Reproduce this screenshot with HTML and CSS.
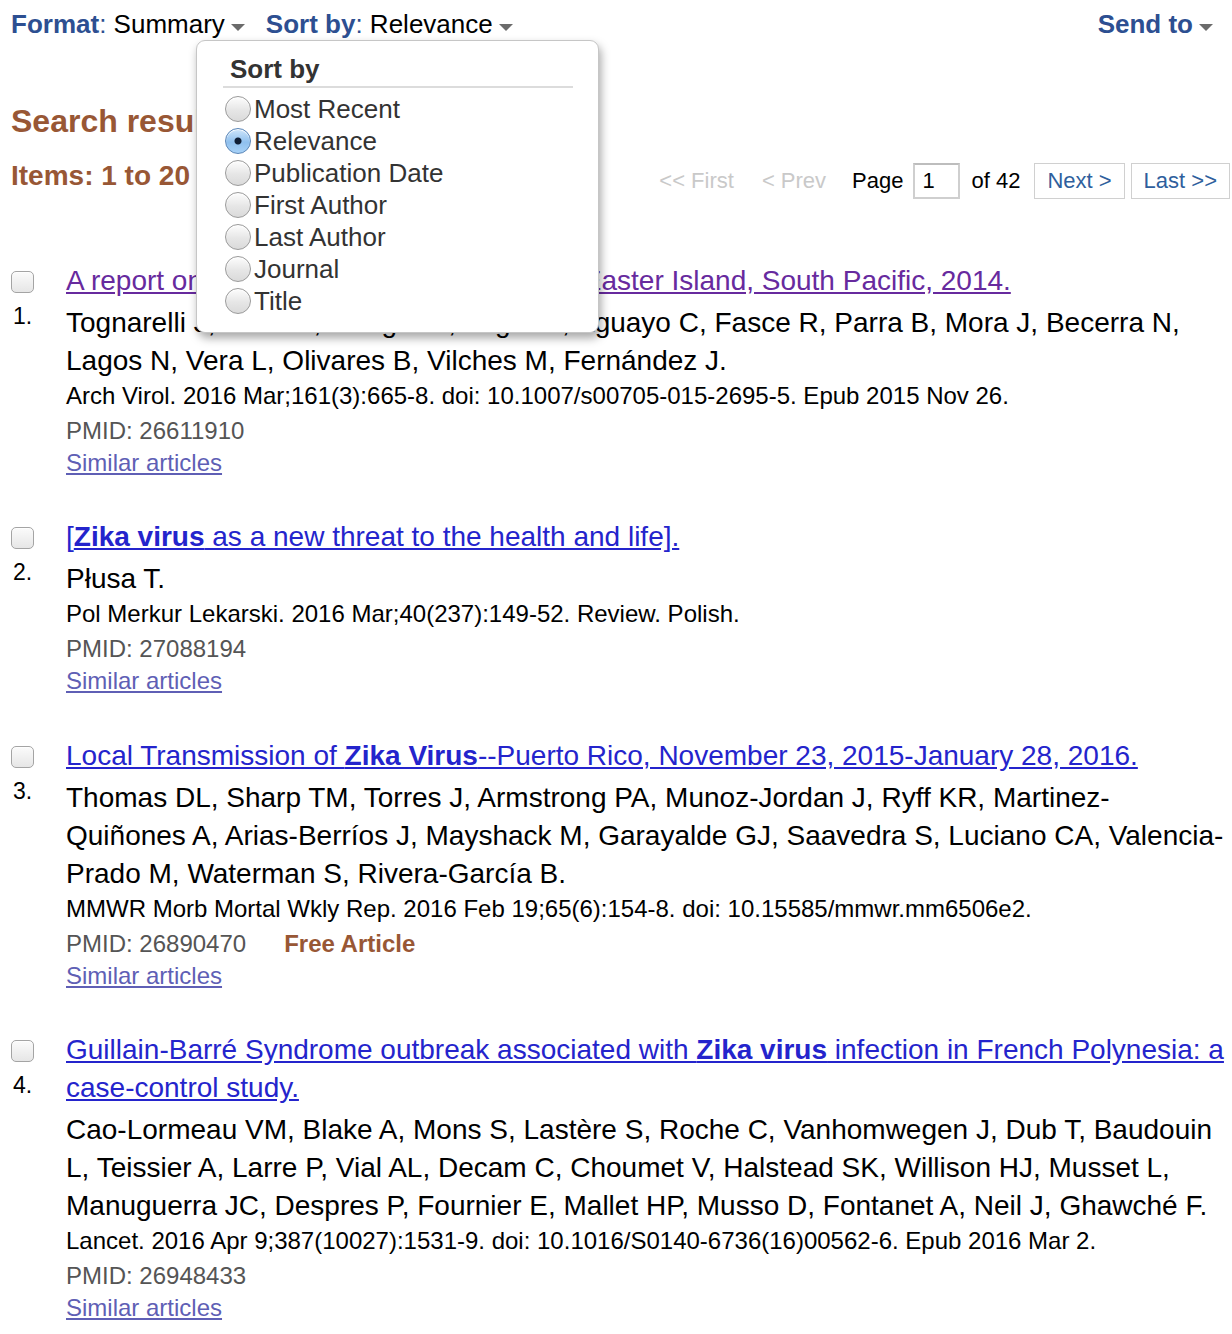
FILE: index.html
```html
<!DOCTYPE html>
<html>
<head>
<meta charset="utf-8">
<link rel="stylesheet" href="styles.css">
</head>
<body>
<div class="page">
  <div class="topbar">
    <div class="menu"><span class="lbl">Format<span class="colon">:</span></span><span class="val">&nbsp;Summary</span><span class="arrow"></span></div>
    <div class="menu sort"><span class="lbl">Sort by<span class="colon">:</span></span><span class="val">&nbsp;Relevance</span><span class="arrow"></span></div>
    <div class="menu send"><span class="lbl">Send to</span><span class="arrow"></span></div>
  </div>

  <h1 class="heading">Search results</h1>

  <div class="items-row">
    <div class="items-label">Items: 1 to 20 of 824</div>
    <div class="pager">
      <span class="dis">&lt;&lt; First</span>
      <span class="dis prev">&lt; Prev</span>
      <span class="pagelbl">Page</span>
      <span class="pageinput">1</span>
      <span class="of">of 42</span>
      <a class="btn">Next &gt;</a>
      <a class="btn last">Last &gt;&gt;</a>
    </div>
  </div>

  <div class="results">
    <div class="rslt">
      <div class="side"><span class="cb"></span><div class="num">1.</div></div>
      <div class="body">
        <div class="title"><a class="visited">A report on the outbreak of <b>Zika virus</b> on Easter Island, South Pacific, 2014.</a></div>
        <div class="authors">Tognarelli J, Ulloa S, Villagra E, Lagos J, Aguayo C, Fasce R, Parra B, Mora J, Becerra N, Lagos N, Vera L, Olivares B, Vilches M, Fernández J.</div>
        <div class="jrnl">Arch Virol. 2016 Mar;161(3):665-8. doi: 10.1007/s00705-015-2695-5. Epub 2015 Nov 26.</div>
        <div class="pmid">PMID: 26611910</div>
        <div class="similar"><a>Similar articles</a></div>
      </div>
    </div>

    <div class="rslt">
      <div class="side"><span class="cb"></span><div class="num">2.</div></div>
      <div class="body">
        <div class="title"><a>[<b>Zika virus</b> as a new threat to the health and life].</a></div>
        <div class="authors">Płusa T.</div>
        <div class="jrnl">Pol Merkur Lekarski. 2016 Mar;40(237):149-52. Review. Polish.</div>
        <div class="pmid">PMID: 27088194</div>
        <div class="similar"><a>Similar articles</a></div>
      </div>
    </div>

    <div class="rslt">
      <div class="side"><span class="cb"></span><div class="num">3.</div></div>
      <div class="body">
        <div class="title"><a>Local Transmission of <b>Zika Virus</b>--Puerto Rico, November 23, 2015-January 28, 2016.</a></div>
        <div class="authors">Thomas DL, Sharp TM, Torres J, Armstrong PA, Munoz-Jordan J, Ryff KR, Martinez-Quiñones A, Arias-Berríos J, Mayshack M, Garayalde GJ, Saavedra S, Luciano CA, Valencia-Prado M, Waterman S, Rivera-García B.</div>
        <div class="jrnl">MMWR Morb Mortal Wkly Rep. 2016 Feb 19;65(6):154-8. doi: 10.15585/mmwr.mm6506e2.</div>
        <div class="pmid">PMID: 26890470<span class="free">Free Article</span></div>
        <div class="similar"><a>Similar articles</a></div>
      </div>
    </div>

    <div class="rslt">
      <div class="side"><span class="cb"></span><div class="num">4.</div></div>
      <div class="body">
        <div class="title"><a>Guillain-Barré Syndrome outbreak associated with <b>Zika virus</b> infection in French Polynesia: a case-control study.</a></div>
        <div class="authors">Cao-Lormeau VM, Blake A, Mons S, Lastère S, Roche C, Vanhomwegen J, Dub T, Baudouin L, Teissier A, Larre P, Vial AL, Decam C, Choumet V, Halstead SK, Willison HJ, Musset L, Manuguerra JC, Despres P, Fournier E, Mallet HP, Musso D, Fontanet A, Neil J, Ghawché F.</div>
        <div class="jrnl">Lancet. 2016 Apr 9;387(10027):1531-9. doi: 10.1016/S0140-6736(16)00562-6. Epub 2016 Mar 2.</div>
        <div class="pmid">PMID: 26948433</div>
        <div class="similar"><a>Similar articles</a></div>
      </div>
    </div>
  </div>

  <div class="dropdown">
    <div class="dd-head">Sort by</div>
    <div class="dd-list">
      <div class="opt"><span class="radio"></span>Most Recent</div>
      <div class="opt"><span class="radio on"></span>Relevance</div>
      <div class="opt"><span class="radio"></span>Publication Date</div>
      <div class="opt"><span class="radio"></span>First Author</div>
      <div class="opt"><span class="radio"></span>Last Author</div>
      <div class="opt"><span class="radio"></span>Journal</div>
      <div class="opt"><span class="radio"></span>Title</div>
    </div>
  </div>
</div>
</body>
</html>
```

FILE: styles.css
```css
html, body {
  margin: 0;
  padding: 0;
  background: #fff;
}
body {
  font-family: "Liberation Sans", Arial, sans-serif;
  color: #000;
  overflow: hidden;
}
.page {
  position: relative;
  width: 1232px;
}
a {
  text-decoration: underline;
  cursor: pointer;
}

/* top bar */
.topbar {
  display: flex;
  align-items: center;
  height: 48px;
  padding: 0 19px 0 11px;
  font-size: 26px;
}
.menu {
  display: flex;
  align-items: center;
  white-space: nowrap;
}
.menu .lbl {
  color: #2d4f91;
  font-weight: bold;
}
.menu .colon {
  font-weight: normal;
}
.menu .val {
  color: #000;
}
.menu.sort {
  margin-left: 21px;
}
.menu.send {
  margin-left: auto;
}
.arrow {
  display: inline-block;
  width: 0;
  height: 0;
  margin-left: 6px;
  margin-top: 6px;
  border-left: 7px solid transparent;
  border-right: 7px solid transparent;
  border-top: 7px solid #6b6b6b;
}

/* heading */
.heading {
  margin: 53px 0 0 11px;
  font-size: 32px;
  line-height: 40px;
  font-weight: bold;
  color: #985735;
}
.items-row {
  display: flex;
  justify-content: space-between;
  height: 42px;
  margin-top: 17px;
}
.items-label {
  padding-left: 11px;
  font-size: 28px;
  line-height: 35px;
  font-weight: bold;
  color: #985735;
}
.pager {
  align-self: flex-end;
  display: flex;
  align-items: center;
  height: 36px;
  padding-right: 2px;
  font-size: 22px;
  margin-bottom: 1px;
}
.pager .dis {
  color: #c9c9c9;
}
.pager .prev {
  margin-left: 28px;
}
.pager .pagelbl {
  margin-left: 26px;
}
.pageinput {
  box-sizing: border-box;
  width: 47px;
  height: 36px;
  margin-left: 10px;
  padding-left: 7px;
  line-height: 32px;
  border: 2px solid #cfcfcf;
  border-top-color: #bdbdbd;
}
.pager .of {
  margin-left: 11px;
}
.btn {
  box-sizing: border-box;
  height: 36px;
  line-height: 34px;
  padding: 0 12px;
  margin-left: 14px;
  border: 1px solid #d0d0d0;
  color: #2f5f9d;
  text-decoration: none;
}
.btn.last {
  margin-left: 6px;
}

/* results */
.results {
  margin-top: 62px;
}
.rslt {
  display: grid;
  grid-template-columns: 66px 1fr;
  margin-bottom: 42px;
}
.rslt:nth-child(2) {
  margin-bottom: 43px;
}
.side {
  display: flex;
  flex-direction: column;
  padding-left: 11px;
}
.cb {
  box-sizing: border-box;
  display: block;
  width: 23px;
  height: 22px;
  margin-top: 9px;
  border: 1px solid #a4a4a4;
  border-radius: 5px;
  background: linear-gradient(#fbfbfb, #e6e6e6);
  box-shadow: inset 0 1px 1px rgba(255,255,255,0.8);
}
.num {
  margin-top: 9px;
  margin-left: 2px;
  font-size: 23px;
  line-height: 28px;
}
.body {
  min-width: 0;
  padding-right: 4px;
}
.title {
  font-size: 28px;
  line-height: 38px;
}
.title a {
  color: #2424cc;
}
.title a.visited {
  color: #672a9e;
}
.authors {
  margin-top: 4px;
  font-size: 28px;
  line-height: 38px;
}
.jrnl {
  font-size: 24px;
  line-height: 32px;
}
.pmid {
  font-size: 24px;
  line-height: 38px;
  color: #555;
}
.free {
  margin-left: 38px;
  font-weight: bold;
  color: #985735;
}
.similar {
  font-size: 24px;
  line-height: 26px;
}
.similar a {
  color: #5f5fb5;
}

/* dropdown */
.dropdown {
  position: absolute;
  left: 196px;
  top: 40px;
  box-sizing: border-box;
  width: 403px;
  height: 293px;
  padding: 13px 25px 0 26px;
  background: #fff;
  border: 1px solid #c6c6c6;
  border-radius: 9px;
  box-shadow: 2px 5px 10px rgba(0,0,0,0.35);
}
.dd-head {
  padding-left: 7px;
  font-size: 26px;
  line-height: 30px;
  font-weight: bold;
  color: #333;
  border-bottom: 2px solid #dcdcdc;
  padding-bottom: 2px;
}
.dd-list {
  margin-top: 5px;
}
.opt {
  display: flex;
  align-items: center;
  height: 32px;
  font-size: 26px;
  color: #333;
}
.radio {
  box-sizing: border-box;
  display: inline-block;
  width: 26px;
  height: 26px;
  margin-left: 2px;
  margin-right: 3px;
  border-radius: 50%;
  border: 1px solid #9a9a9a;
  background: linear-gradient(#fdfdfd, #e6e6e6 55%, #dadada);
  box-shadow: inset 0 1px 1px #fff;
}
.radio.on {
  border-color: #5a86b8;
  background: radial-gradient(circle at 50% 50%, #0f1f36 0 3px, transparent 4px), linear-gradient(#cfe6fb, #8fc0ee 55%, #a8d2f7);
}
```
